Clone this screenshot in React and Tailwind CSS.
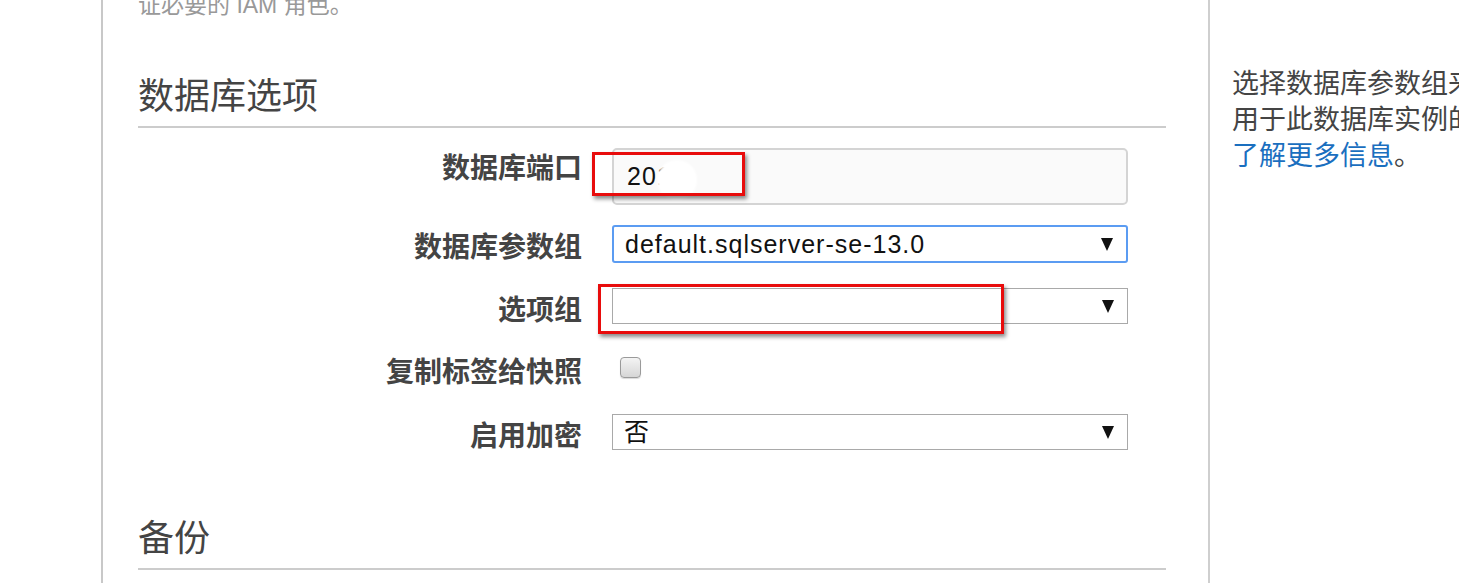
const FONT = "font-['Liberation_Sans','Noto_Sans_CJK_SC',sans-serif]";

function Arrow() {
  return (
    <svg width="12" height="13" viewBox="0 0 12 13" className="shrink-0">
      <polygon points="0,0 12,0 6,13" fill="#111" />
    </svg>
  );
}

function Label({ children, pt }) {
  return (
    <div
      className={`w-[444px] shrink-0 text-right text-[28px] leading-[28px] font-bold text-[#444] ${pt}`}
    >
      {children}
    </div>
  );
}

function Select({ children, focused, h }) {
  return (
    <div
      className={`w-[516px] ${h} flex items-center justify-between pl-[11px] pr-[13px] bg-white text-[25px] tracking-[1px] text-[#111] ${
        focused
          ? "border-2 border-[#5b9cf2] rounded-[3px]"
          : "border border-[#a9a9a9]"
      }`}
    >
      <span className="leading-none">{children}</span>
      <Arrow />
    </div>
  );
}

export default function App() {
  return (
    <div className={`relative w-full h-[583px] overflow-hidden bg-white flex ${FONT}`}>
      {/* main column */}
      <div className="ml-[101px] w-[1107px] shrink-0 border-l-2 border-[#c8c8c8] pl-[35px] pr-[42px]">
        <p className="mt-[-6px] text-[23px] leading-[23px] text-[#999]">
          证必要的 IAM 角色。
        </p>

        <h2 className="mt-[62px] pb-[11px] border-b-2 border-[#cccccc] text-[36px] leading-[36px] text-[#444]">
          数据库选项
        </h2>

        <div className="flex mt-[20px] gap-[30px]">
          <Label pt="pt-[7px]">数据库端口</Label>
          <div className="w-[516px] h-[57px] bg-[#fafafa] border-2 border-[#d4d4d4] rounded-[5px] flex items-center pl-[13px] text-[25px] tracking-[1px] text-[#111]">
            <span className="relative leading-none">
              201
              <span className="absolute left-[30px] top-[-4px] w-[40px] h-[40px] rounded-full bg-[#ffffff] blur-[1px]" />
            </span>
          </div>
        </div>

        <div className="flex mt-[20px] gap-[30px]">
          <Label pt="pt-[9px]">数据库参数组</Label>
          <Select focused h="h-[38px]">
            default.sqlserver-se-13.0
          </Select>
        </div>

        <div className="flex mt-[25px] gap-[30px]">
          <Label pt="pt-[9px]">选项组</Label>
          <Select h="h-[36px]">
            <span className="text-white">global</span>
          </Select>
        </div>

        <div className="flex mt-[32px] gap-[30px]">
          <Label pt="pt-[2px]">复制标签给快照</Label>
          <div className="ml-[8px] w-[21px] h-[21px] rounded-[4px] border border-[#9a9a9a] bg-gradient-to-b from-[#f4f4f4] to-[#d6d6d6] shadow-[0_1px_1px_rgba(0,0,0,0.15)]" />
        </div>

        <div className="flex mt-[27px] gap-[30px]">
          <Label pt="pt-[9px]">启用加密</Label>
          <Select h="h-[36px]">否</Select>
        </div>

        <h2 className="mt-[70px] pb-[11px] border-b-2 border-[#cccccc] text-[36px] leading-[36px] text-[#444]">
          备份
        </h2>
      </div>

      {/* help panel */}
      <div className="relative flex-1 border-l-2 border-[#cfcfcf] pl-[22px] pt-[66px] overflow-hidden whitespace-nowrap text-[27px] leading-[36px] text-[#444]">
        <p>选择数据库参数组来定义</p>
        <p>用于此数据库实例的配置。</p>
        <p>
          <a className="text-[#1a6fbf]">了解更多信息</a>。
        </p>
        <svg
          width="22"
          height="42"
          viewBox="0 0 22 42"
          className="absolute left-[-22px] top-[194px]"
        >
          <polygon points="22,0 1,21 22,42" fill="white" stroke="#cfcfcf" strokeWidth="1.5" />
        </svg>
      </div>

      {/* annotation boxes */}
      <div className="absolute left-[592px] top-[152px] w-[153px] h-[44px] border-[3px] border-[#e80c0c] shadow-[2px_3px_4px_rgba(0,0,0,0.45)]" />
      <div className="absolute left-[598px] top-[284px] w-[406px] h-[50px] border-[3px] border-[#e80c0c] shadow-[2px_3px_4px_rgba(0,0,0,0.45)]" />
    </div>
  );
}
